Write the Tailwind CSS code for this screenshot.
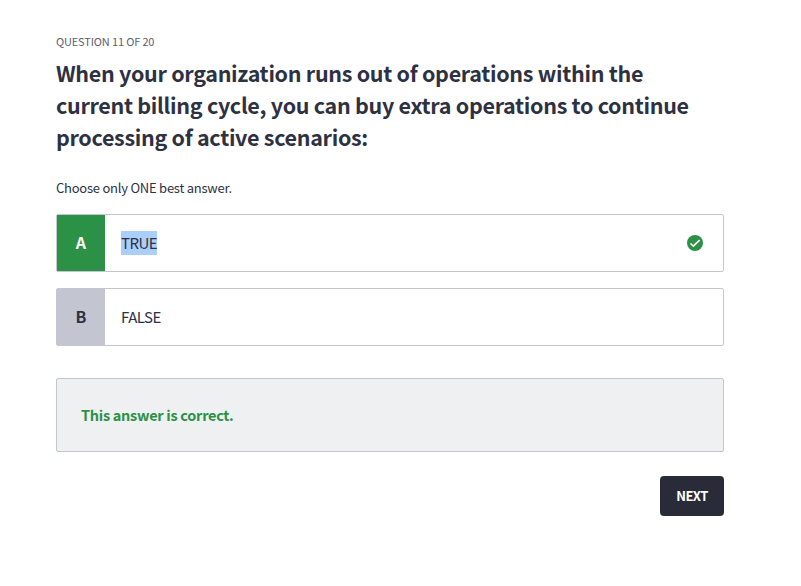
<!DOCTYPE html>
<html lang="en"><head><meta charset="utf-8"><title>Quiz</title>
<script src="https://cdn.jsdelivr.net/npm/@tailwindcss/browser@4"></script></head>
<body class="bg-white text-[#2d3142] font-['Noto_Sans_CJK_SC','Noto_Sans',sans-serif]">
<main class="w-[780px] px-14 pt-[33px]">
<p class="text-[11px] leading-4 tracking-[-0.15px] text-[#5c5e6f] whitespace-nowrap"><span>QUESTION 11 OF 20</span></p>
<h1 class="mt-2 text-[21.5px] leading-8 font-bold tracking-[-0.3px] whitespace-nowrap"><span>When your organization runs out of operations within the</span><br><span>current billing cycle, you can buy extra operations to continue</span><br><span>processing of active scenarios:</span></h1>
<p class="mt-[25px] text-[13px] leading-5 tracking-[-0.24px] whitespace-nowrap"><span>Choose only ONE best answer.</span></p>
<div class="mt-4 flex h-[58px] items-center border border-[#c3c5d1] rounded-xs">
<div class="flex h-full w-12 items-center justify-center bg-[#2a9147] pb-0.5 text-white font-bold"><span>A</span></div>
<span class="ml-4 bg-[#abcffd] text-[15px] leading-6 tracking-[-0.5px]">TRUE</span>
<svg class="ml-auto mr-5 size-4" viewBox="0 0 16 16"><circle cx="8" cy="8" r="8" fill="#2a9147"/><path d="M3.5 8.5 6.4 11.2 12.6 5.2" fill="none" stroke="#fff" stroke-width="1.7"/></svg>
</div>
<div class="mt-4 flex h-[58px] items-center border border-[#c3c5d1] rounded-xs">
<div class="flex h-full w-12 items-center justify-center bg-[#c3c5d1] pb-0.5 font-bold"><span>B</span></div>
<span class="ml-4 text-[15px] leading-6 tracking-[-0.5px]">FALSE</span>
</div>
<div class="mt-8 flex h-[74px] items-center border border-[#c3c5d1] bg-[#eff0f2] px-6 text-[14.5px] font-bold tracking-[-0.28px] text-[#2a9147] rounded-xs"><span>This answer is correct.</span></div>
<div class="mt-6 flex justify-end"><button class="h-10 w-16 rounded-[4px] bg-[#292b38] text-[13px] font-bold tracking-[-0.5px] text-white"><span>NEXT</span></button></div>
</main></body></html>
